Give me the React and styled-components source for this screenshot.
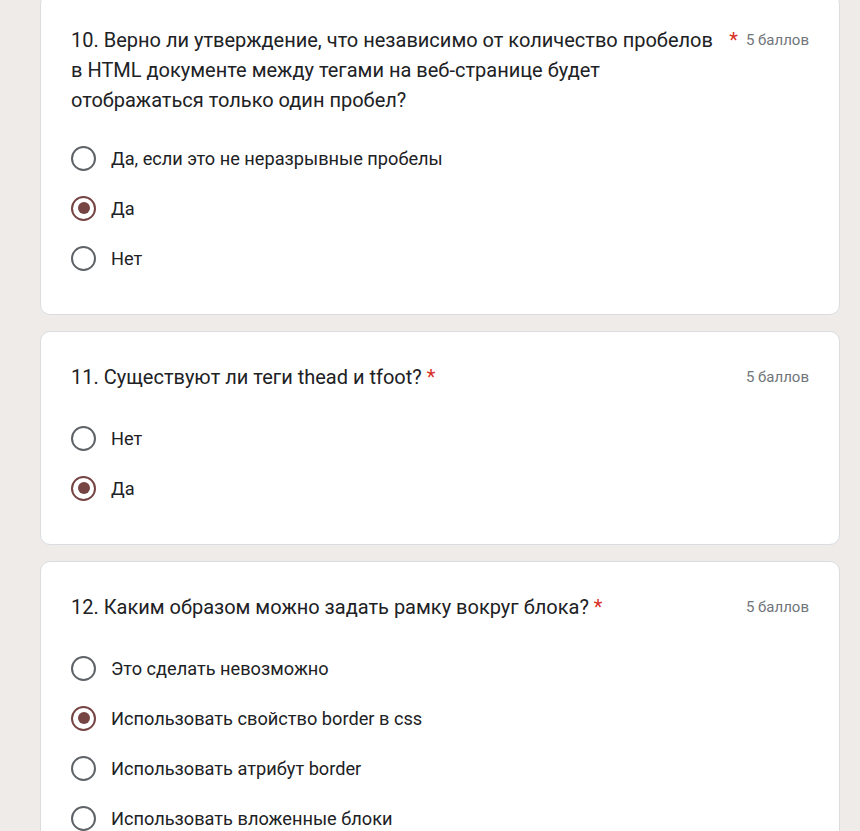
import styled, { createGlobalStyle } from 'styled-components'

const GlobalStyle = createGlobalStyle`
  body {
    margin: 0;
    background-color: #efebe9;
    font-family: Roboto, "Liberation Sans", Arial, sans-serif;
    color: #202124;
    overflow: hidden;
  }
`

const Page = styled.div`
  display: flex;
  flex-direction: column;
  gap: 16px;
  width: 800px;
  padding-left: 40px;
  margin-top: -6px;
`

const Card = styled.div`
  background-color: #fff;
  border: 1px solid #dadce0;
  border-radius: 10px;
  padding: 30px 30px 31px;
`

const Header = styled.div`
  display: flex;
  align-items: flex-start;
  margin-bottom: ${({ multiline }) => (multiline ? '18px' : '21px')};
`

const Title = styled.div`
  flex: 0 1 auto;
  font-size: 20px;
  line-height: 30px;
`

const Required = styled.span`
  flex: 0 0 auto;
  color: #d93025;
  font-size: 20px;
  line-height: 30px;
  padding-left: 5px;
`

const Points = styled.div`
  flex: 0 0 auto;
  margin-left: auto;
  padding-left: 8px;
  font-size: 15px;
  line-height: 30px;
  color: #70757a;
`

const Option = styled.label`
  display: flex;
  align-items: center;
  height: 50px;
  gap: 15px;
  font-size: 18.2px;
`

const Radio = styled.span`
  box-sizing: border-box;
  width: 25px;
  height: 25px;
  border-radius: 50%;
  border: 2.5px solid ${({ checked }) => (checked ? '#774444' : '#5f6368')};
  display: flex;
  align-items: center;
  justify-content: center;

  &::after {
    content: '';
    width: 12px;
    height: 12px;
    border-radius: 50%;
    background-color: #774444;
    display: ${({ checked }) => (checked ? 'block' : 'none')};
  }
`

const questions = [
  {
    title: '10. Верно ли утверждение, что независимо от количество пробелов в HTML документе между тегами на веб-странице будет отображаться только один пробел?',
    options: ['Да, если это не неразрывные пробелы', 'Да', 'Нет'],
    answer: 1,
    long: true,
  },
  {
    title: '11. Существуют ли теги thead и tfoot?',
    options: ['Нет', 'Да'],
    answer: 1,
  },
  {
    title: '12. Каким образом можно задать рамку вокруг блока?',
    options: [
      'Это сделать невозможно',
      'Использовать свойство border в css',
      'Использовать атрибут border',
      'Использовать вложенные блоки',
    ],
    answer: 1,
  },
]

function Question({ q }) {
  return (
    <Card>
      <Header multiline={q.long}>
        <Title>{q.title}</Title>
        <Required>*</Required>
        <Points>5 баллов</Points>
      </Header>
      {q.options.map((opt, i) => (
        <Option key={opt}>
          <Radio checked={i === q.answer} />
          {opt}
        </Option>
      ))}
    </Card>
  )
}

function App() {
  return (
    <>
      <GlobalStyle />
      <Page>
        {questions.map((q) => (
          <Question key={q.title} q={q} />
        ))}
      </Page>
    </>
  )
}

export default App
